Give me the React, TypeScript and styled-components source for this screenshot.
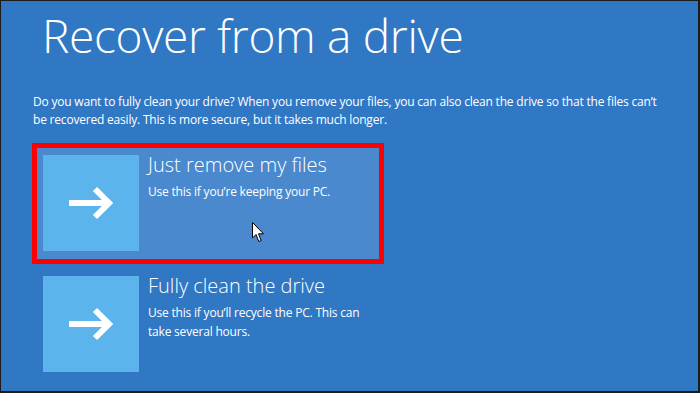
import React from "react";
import styled, { createGlobalStyle } from "styled-components";

const GlobalStyle = createGlobalStyle`
  html, body {
    margin: 0;
    padding: 0;
    background: #1c1c1c;
  }

  * {
    box-sizing: border-box;
  }
`;

const Screen = styled.div`
  position: relative;
  display: flex;
  flex-direction: column;

  width: 700px;
  height: 393px;
  overflow: hidden;

  border: 1px solid #1c1c1c;
  border-right-width: 2px;
  border-bottom-width: 2px;
  padding: 0 0 0 31px;

  background-color: #3077c4;
  color: #ffffff;
  font-family: "Open Sans", "Liberation Sans", sans-serif;
`;

const Title = styled.h1`
  margin: 4px 0 0 10px;

  font-size: 46px;
  font-weight: 300;
  line-height: 60px;
  letter-spacing: -0.3px;
`;

const Description = styled.p`
  margin: 28px 0 0 1px;

  font-size: 12px;
  line-height: 18px;
  letter-spacing: -0.2px;
`;

const OptionList = styled.div`
  display: flex;
  flex-direction: column;
  margin-top: 14px;
`;

const Option = styled.div<{ selected?: boolean }>`
  display: flex;
  gap: 9px;

  width: 352px;
  border: 5px solid ${(props) => (props.selected ? "#ff0000" : "transparent")};
  padding: 7px 6px 8px;

  background-color: ${(props) => (props.selected ? "#4a89cd" : "transparent")};
  cursor: pointer;
`;

const Tile = styled.div`
  display: flex;
  flex-shrink: 0;
  justify-content: center;
  align-items: center;

  width: 96px;
  height: 96px;

  background-color: #5bb4ec;
`;

const OptionText = styled.div`
  display: flex;
  flex-direction: column;
`;

const OptionTitle = styled.h2`
  margin: -3px 0 0;

  font-size: 20px;
  font-weight: 300;
  line-height: 26px;
`;

const OptionDescription = styled.p`
  margin: 4px 0 0;

  font-size: 12px;
  line-height: 19px;
  letter-spacing: -0.2px;
`;

const Pointer = styled.svg`
  position: absolute;
  left: 251px;
  top: 221px;
`;

const Arrow = () => (
  <svg width="48" height="36" viewBox="0 0 48 36">
    <path
      d="M2 18 H42 M28 4 L42 18 L28 32"
      fill="none"
      stroke="#ffffff"
      strokeWidth="6"
      strokeLinecap="butt"
      strokeLinejoin="miter"
    />
  </svg>
);

const options = [
  {
    title: "Just remove my files",
    description: ["Use this if you’re keeping your PC."],
    selected: true,
  },
  {
    title: "Fully clean the drive",
    description: ["Use this if you’ll recycle the PC. This can", "take several hours."],
  },
];

export default function App() {
  return (
    <Screen>
      <GlobalStyle />
      <Title>Recover from a drive</Title>
      <Description>
        Do you want to fully clean your drive? When you remove your files, you can also clean the drive so that the files can’t
        <br />
        be recovered easily. This is more secure, but it takes much longer.
      </Description>
      <OptionList>
        {options.map((option) => (
          <Option key={option.title} selected={option.selected}>
            <Tile>
              <Arrow />
            </Tile>
            <OptionText>
              <OptionTitle>{option.title}</OptionTitle>
              <OptionDescription>
                {option.description.map((line, i) => (
                  <React.Fragment key={line}>
                    {i > 0 && <br />}
                    {line}
                  </React.Fragment>
                ))}
              </OptionDescription>
            </OptionText>
          </Option>
        ))}
      </OptionList>
      <Pointer width="13" height="21" viewBox="0 0 13 21">
        <path
          d="M0.5 0.5 V16 L4 12.5 L6.8 19.5 L9.2 18.5 L6.5 11.8 H11.5 Z"
          fill="#ffffff"
          stroke="#000000"
          strokeWidth="1"
          strokeLinejoin="round"
        />
      </Pointer>
    </Screen>
  );
}
